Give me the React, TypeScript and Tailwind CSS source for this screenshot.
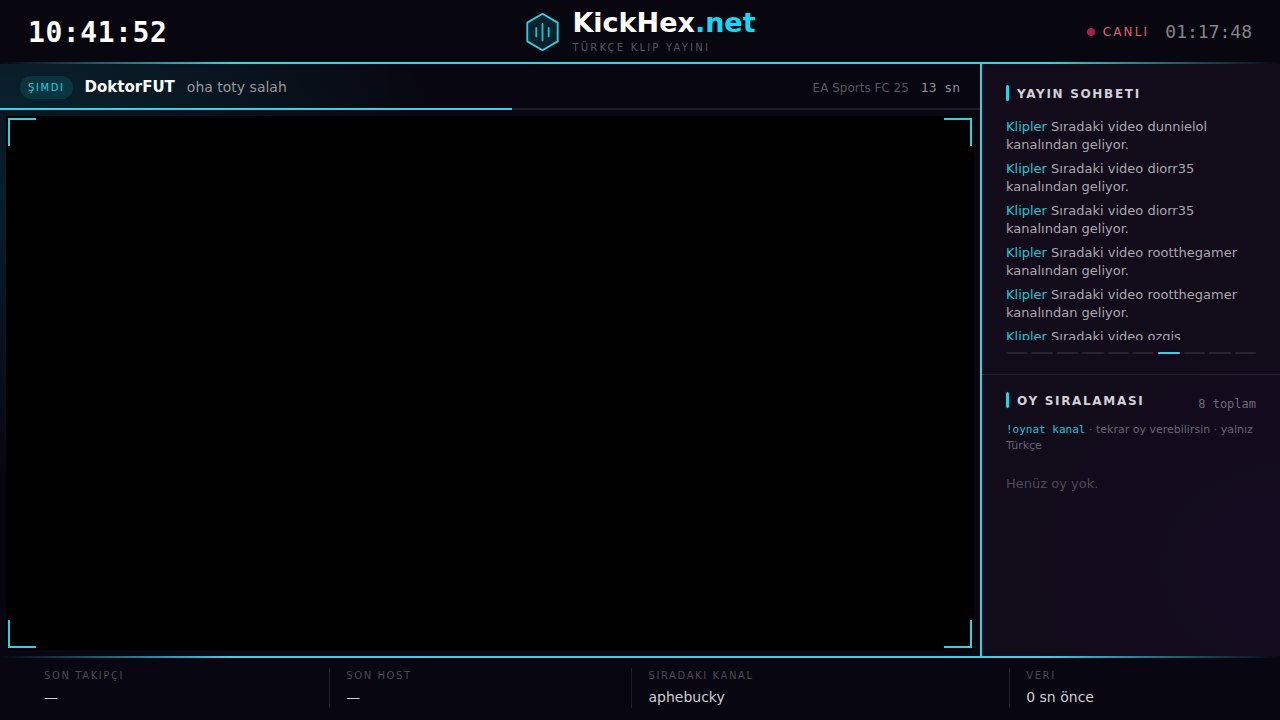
import React from "react";

const CHANNELS = [
  "dunnielol",
  "diorr35",
  "diorr35",
  "rootthegamer",
  "rootthegamer",
  "ozgis",
];

const STATS = [
  { label: "SON TAKIPÇI", value: "—" },
  { label: "SON HOST", value: "—" },
  { label: "SIRADAKI KANAL", value: "aphebucky" },
  { label: "VERI", value: "0 sn önce" },
];

const PAGE_COUNT = 10;
const ACTIVE_PAGE = 6;

const MONO = "font-['DejaVu_Sans_Mono',monospace]";

function GlowLine() {
  return (
    <div className="h-0.5 shrink-0 bg-[linear-gradient(90deg,transparent,#3dcfe3_18%,#3dcfe3_82%,transparent)]" />
  );
}

function Logo() {
  return (
    <svg width="36" height="40" viewBox="0 0 36 40" fill="none" aria-hidden="true">
      <path
        d="M18.5 1.8 33.7 10.6V29.4L18.5 38.2 3.3 29.4V10.6Z"
        fill="#07222c"
        stroke="#2fd0e2"
        strokeWidth="1.8"
        strokeLinejoin="round"
      />
      <path
        d="M12.3 16v8.4M18.5 11.8v16.6M24.7 16v8.4"
        stroke="#2bbccd"
        strokeWidth="1.8"
        strokeLinecap="round"
      />
    </svg>
  );
}

function SectionTitle({ children }: { children: React.ReactNode }) {
  return (
    <h2 className="flex items-start gap-2 text-xs font-bold leading-[18px] tracking-[0.14em] text-[#d3d0d8]">
      <span className="h-4 w-[3px] rounded-xs bg-[#22d3ee]" />
      {children}
    </h2>
  );
}

function Header() {
  return (
    <header className="shrink-0 bg-[#08060f]">
      <div className="grid h-[62px] grid-cols-[1fr_auto_1fr] items-center px-7 pt-0.5">
        <time className={`${MONO} text-[28px] font-bold leading-[33px] tracking-[0.02em] text-white`}>
          10:41:52
        </time>
        <div className="flex items-center gap-3">
          <Logo />
          <div>
            <h1 className="text-[27px] font-bold leading-[30px] text-white">
              KickHex<span className="text-[#14d8f5]">.net</span>
            </h1>
            <p className="mt-0.5 text-[10px] leading-4 tracking-[0.22em] text-[#57545f]">
              TÜRKÇE KLIP YAYINI
            </p>
          </div>
        </div>
        <div className="flex items-center justify-end gap-4">
          <span className="flex items-center gap-2 text-xs tracking-[0.18em] text-[#e0607c]">
            <span className="size-2 rounded-full bg-[#a82048]" />
            CANLI
          </span>
          <time className={`${MONO} text-lg text-[#85838b]`}>01:17:48</time>
        </div>
      </div>
      <GlowLine />
    </header>
  );
}

function NowPlaying() {
  return (
    <div className="shrink-0">
      <div className="flex h-11 items-center justify-between bg-[linear-gradient(90deg,rgba(34,211,238,0.05),transparent_45%)] px-5 pt-0.5">
        <div className="flex items-center gap-3">
          <span className="rounded-full bg-[#0a3540] px-2 py-1 text-[10px] leading-[15px] tracking-[0.16em] text-[#20cde0]">
            ŞIMDI
          </span>
          <strong className="text-[15px] leading-5 text-white">DoktorFUT</strong>
          <span className="text-sm leading-5 text-[#96979d]">oha toty salah</span>
        </div>
        <div className="mt-0.5 flex items-center gap-3">
          <span className="text-xs text-[#57565f]">EA Sports FC 25</span>
          <span className={`${MONO} text-[13px] text-[#918f97]`}>13 sn</span>
        </div>
      </div>
      <div className="h-0.5 bg-[#1f1c27]">
        <div className="h-full bg-[#3dcfe3]" style={{ width: `${(512 / 980) * 100}%` }} />
      </div>
    </div>
  );
}

function Stage() {
  return (
    <div className="flex min-h-0 grow p-1.5">
      <div className="relative grow bg-black">
        <span className="absolute left-0.5 top-0.5 size-7 border-l-2 border-t-2 border-[#2fd0e2]" />
        <span className="absolute right-0.5 top-0.5 size-7 border-r-2 border-t-2 border-[#2fd0e2]" />
        <span className="absolute bottom-0.5 left-0.5 size-7 border-b-2 border-l-2 border-[#2fd0e2]" />
        <span className="absolute bottom-0.5 right-0.5 size-7 border-b-2 border-r-2 border-[#2fd0e2]" />
      </div>
    </div>
  );
}

function Chat() {
  return (
    <section className="border-b border-[#28222f] px-6 pb-5 pt-[21px]">
      <SectionTitle>YAYIN SOHBETI</SectionTitle>
      <ul className="mt-[15px] flex h-[222px] flex-col gap-1.5 overflow-hidden text-[13px] leading-[18px] text-[#aaa7af]">
        {CHANNELS.map((channel, i) => (
          <li key={i} className="shrink-0">
            <span className="text-[#1fc4d6]">Klipler</span> Sıradaki video {channel} kanalından
            geliyor.
          </li>
        ))}
      </ul>
      <div className="mt-3 flex gap-1">
        {Array.from({ length: PAGE_COUNT }, (_, i) => (
          <span
            key={i}
            className={`h-0.5 grow rounded-xs ${i === ACTIVE_PAGE ? "bg-[#3dcfe3]" : "bg-[#28222f]"}`}
          />
        ))}
      </div>
    </section>
  );
}

function Votes() {
  return (
    <section className="px-6 pt-[17px]">
      <div className="flex items-start justify-between">
        <SectionTitle>OY SIRALAMASI</SectionTitle>
        <span className={`${MONO} mt-1 text-xs leading-4 text-[#6d6974]`}>8 toplam</span>
      </div>
      <p className="mt-2.5 text-[11px] leading-4 text-[#68636f]">
        <code className={`${MONO} text-[#1fc4d6]`}>!oynat kanal</code> · tekrar oy verebilirsin ·
        yalnız Türkçe
      </p>
      <p className="mt-5 text-[13px] leading-5 text-[#4f4957]">Henüz oy yok.</p>
    </section>
  );
}

function Footer() {
  return (
    <footer className="shrink-0 bg-[#080610]">
      <GlowLine />
      <dl className="grid grid-cols-[1fr_1fr_1.25fr_0.8fr] px-7 pb-3 pt-2.5">
        {STATS.map((stat) => (
          <div key={stat.label} className="h-10 border-r border-[#201e28] px-4 last:border-r-0">
            <dt className="text-[10px] leading-[15px] tracking-[0.16em] text-[#4c4953]">
              {stat.label}
            </dt>
            <dd className="mt-1 text-sm leading-5 text-[#d0ced3]">{stat.value}</dd>
          </div>
        ))}
      </dl>
    </footer>
  );
}

export default function App() {
  return (
    <div className="flex h-screen flex-col overflow-hidden bg-[#080610] font-['DejaVu_Sans',sans-serif]">
      <Header />
      <main className="flex min-h-0 grow bg-[radial-gradient(ellipse_460px_290px_at_0%_22%,rgba(10,170,190,0.15),transparent)]">
        <div className="flex min-w-0 grow flex-col">
          <NowPlaying />
          <Stage />
        </div>
        <aside className="w-[300px] shrink-0 border-l-2 border-[#3dcfe3] bg-[#120b19] bg-[radial-gradient(ellipse_280px_240px_at_100%_85%,rgba(40,16,100,0.12),transparent)]">
          <Chat />
          <Votes />
        </aside>
      </main>
      <Footer />
    </div>
  );
}
